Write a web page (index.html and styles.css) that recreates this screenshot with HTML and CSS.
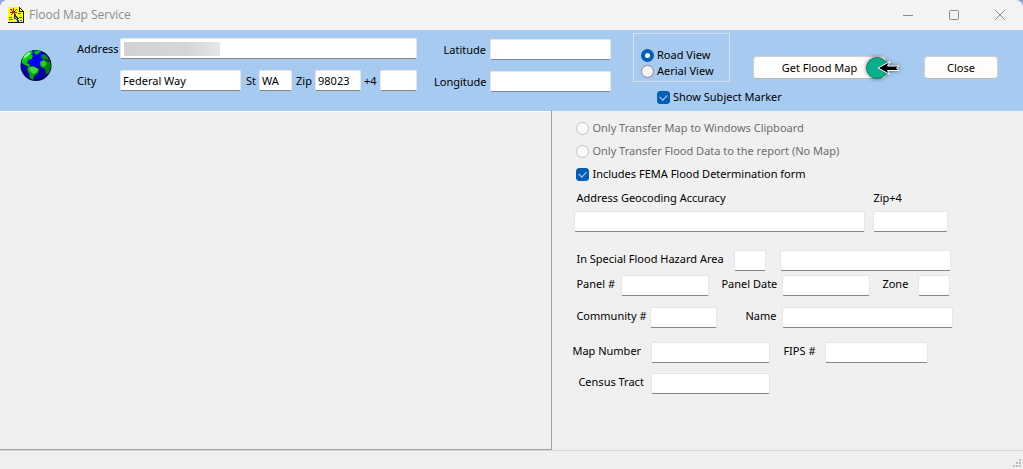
FILE: index.html
```html
<!DOCTYPE html>
<html lang="en">
<head>
<meta charset="utf-8">
<title>Flood Map Service</title>
<link rel="stylesheet" href="styles.css">
</head>
<body>
<div class="window">
  <header class="titlebar">
    <svg class="app-icon" width="16" height="17" viewBox="0 0 16 17" shape-rendering="crispEdges" aria-hidden="true">
      <path d="M0 0h12l3 3v13H0z" fill="#ff0"/>
      <path d="M0 15h16v1H0zM15 4h1v12h-1zM11 0h1v4h4v1h-5zM12 1h1v1h-1zM13 2h1v1h-1zM14 3h1v1h-1z" fill="#111"/>
      <path d="M12 2h1v2h-1zM13 3h1v1h-1z" fill="#fff"/>
      <path d="M2 2h2v1H2zM5 1h1v3H5zM8 2h1v1H8zM3 3h1v1H3zM7 3h1v1H7zM4 4h3v1H4zM2 5h7v1H2zM4 6h1v1H4zM6 6h1v1H6zM3 7h1v1H3zM7 7h1v1H7z" fill="#b01818"/>
      <path d="M10 6h3v1h-3zM1 10h3v1H1zM1 12h4v1H1zM11 10h3v1h-3zM12 13h2v1h-2z" fill="#3c64b4"/>
      <path d="M6 7h1v1H6zM6 8h2v1H6zM6 9h3v1H6zM6 10h4v1H6zM6 11h5v1H6zM8 12h2v1H8zM9 13h2v2H9z" fill="#1230a0"/>
      <path d="M7 10h1v1H7zM8 11h1v1H8z" fill="#9cf"/>
    </svg>
    <h1 class="title">Flood Map Service</h1>
    <div class="window-controls">
      <button class="wc" type="button" aria-label="Minimize"><svg width="12" height="12" viewBox="0 0 12 12"><path d="M1 6.500h10"/></svg></button>
      <button class="wc" type="button" aria-label="Maximize"><svg width="12" height="12" viewBox="0 0 12 12"><rect x="1.500" y="1.500" width="9" height="9" rx="1"/></svg></button>
      <button class="wc" type="button" aria-label="Close window"><svg width="12" height="12" viewBox="0 0 12 12"><path d="M1 1l10 10M11 1L1 11"/></svg></button>
    </div>
  </header>

  <form class="search">
    <svg class="globe" width="32" height="33" viewBox="0 0 32 33" aria-hidden="true">
      <circle cx="16" cy="16.500" r="15.500" fill="#000050"/>
      <circle cx="15.500" cy="16" r="14.500" fill="#0000a8"/>
      <path d="M7 6l5-4 9 1 4 6-5 8-6 1-6-4z" fill="#0000ff"/>
      <path d="M2 11l2-5 4-3 4-1 1 2-2 1 2 2-1 3-4 1-1 3 3 2-1 2-4-2-3-2z" fill="#00d000"/>
      <path d="M3 10l2-4 4-3 2 1-3 3-3 2z" fill="#98f898"/>
      <path d="M14 2l6-1 1 2-2 1-2 2-2-1z" fill="#00c000"/>
      <path d="M22 5l4 1 4 6-4-2-2 1-3-3z" fill="#009000"/>
      <path d="M8 18l5-1 6 3-1 4-4 3-1 4-3-2-1-5-2-3z" fill="#00a800"/>
      <path d="M9 18l5 0 4 2-1 3-4 2-3-3z" fill="#40d840"/>
      <path d="M21 14l4-3 5 2 1 4-2 7-3 1-1-5-3-1-2-2z" fill="#008400"/>
      <path d="M20 13l4-2 3 4-3 3-3-1z" fill="#30c830"/>
      <path d="M12 8h2v2h-2zM17 7h1v2h-1zM15 12h2v1h-2z" fill="#0000b0"/>
    </svg>
    <div class="address">
      <div class="row">
        <label class="w-address" for="address">Address</label>
        <div class="redacted-field"><input id="address" type="text"><span class="redaction"></span></div>
      </div>
      <div class="row">
        <label class="w-address" for="city">City</label>
        <input class="f-city" id="city" type="text" value="Federal Way">
        <label class="w-st" for="st">St</label>
        <input class="f-st" id="st" type="text" value="WA">
        <label class="w-zip" for="zip">Zip</label>
        <input class="f-zip" id="zip" type="text" value="98023">
        <label class="w-plus4" for="plus4">+4</label>
        <input class="f-plus4" id="plus4" type="text">
      </div>
    </div>
    <div class="coords">
      <div class="row"><label class="w-coord" for="lat">Latitude</label><input class="f-coord" id="lat" type="text"></div>
      <div class="row"><label class="w-coord" for="lon">Longitude</label><input class="f-coord" id="lon" type="text"></div>
    </div>
    <div class="view">
      <div class="view-group" role="radiogroup" aria-label="View">
        <label class="choice"><input type="radio" name="view" checked>Road View</label>
        <label class="choice"><input type="radio" name="view">Aerial View</label>
      </div>
      <label class="choice marker"><input type="checkbox" checked>Show Subject Marker</label>
    </div>
    <div class="get-map">
      <button class="button" type="button">Get Flood Map</button>
      <svg class="pointer" width="46" height="32" viewBox="0 0 46 32" aria-hidden="true">
        <circle cx="16" cy="16" r="10.500" fill="#0aae8c" stroke="#078565"/>
        <path d="M17 16l12-6.500-2.500 4.500H38l-2.500 2 2.500 2.500H26.500l2.500 4z" fill="#000" stroke="#fff"/>
      </svg>
    </div>
    <button class="button close" type="button">Close</button>
  </form>

  <main class="content">
    <section class="map" aria-label="Map"></section>
    <form class="details">
      <div class="options">
        <label class="choice off"><input type="radio" name="transfer" disabled>Only Transfer Map to Windows Clipboard</label>
        <label class="choice off"><input type="radio" name="transfer" disabled>Only Transfer Flood Data to the report (No Map)</label>
        <label class="choice"><input type="checkbox" checked>Includes FEMA Flood Determination form</label>
      </div>
      <div class="accuracy">
        <div class="stack f-accuracy"><label for="accuracy">Address Geocoding Accuracy</label><input id="accuracy" type="text"></div>
        <div class="stack f-tall"><label for="zip4">Zip+4</label><input id="zip4" type="text"></div>
      </div>
      <div class="row hazard">
        <label class="w-hazard" for="hazard">In Special Flood Hazard Area</label>
        <input class="f-small" id="hazard" type="text">
        <input class="f-name after" type="text" aria-label="Hazard area description">
      </div>
      <div class="row panel">
        <label class="w-panel" for="panel">Panel #</label><input class="f-date" id="panel" type="text">
        <label class="w-date" for="pdate">Panel Date</label><input class="f-date" id="pdate" type="text">
        <label class="w-zone" for="zone">Zone</label><input class="f-small" id="zone" type="text">
      </div>
      <div class="row community">
        <label class="w-community" for="community">Community #</label><input class="f-community" id="community" type="text">
        <label class="w-name" for="name">Name</label><input class="f-name" id="name" type="text">
      </div>
      <div class="row number">
        <label class="w-number" for="mapno">Map Number</label><input class="f-number" id="mapno" type="text">
        <label class="w-fips" for="fips">FIPS #</label><input class="f-fips" id="fips" type="text">
      </div>
      <div class="row census">
        <label class="w-census" for="tract">Census Tract</label><input class="f-number" id="tract" type="text">
      </div>
    </form>
  </main>
  <footer class="status">
    <svg width="10" height="10" viewBox="0 0 10 10" shape-rendering="crispEdges" aria-hidden="true"><path d="M6 0h2v2H6zM3 3h2v2H3zM6 3h2v2H6zM0 6h2v2H0zM3 6h2v2H3zM6 6h2v2H6z" fill="#bcbcbc"/></svg>
  </footer>
</div>
</body>
</html>
```
FILE: styles.css
```css
* { box-sizing: border-box; }
body {
  margin: 0;
  background: #8fa8d8;
  color: #000;
  font: 11px/16px "Noto Sans", "Open Sans", sans-serif;
}
input, button { font: inherit; color: inherit; margin: 0; }
.window {
  display: flex;
  flex-direction: column;
  min-height: 100vh;
  background: #f0f0f0;
  border-radius: 8px 8px 0 0;
  overflow: hidden;
}

.titlebar {
  display: flex;
  align-items: center;
  height: 30px;
  padding-left: 8px;
  background: #f3f3f3;
}
.title { margin: 0 0 0 5px; font-family: "Open Sans", sans-serif; font-size: 12px; font-weight: 400; color: #8c8c8c; }
.window-controls { display: flex; margin-left: auto; }
.wc {
  display: grid;
  place-items: center;
  width: 46px;
  height: 28px;
  padding: 0;
  border: 0;
  background: none;
}
.wc svg { fill: none; stroke: #8a8a8a; }

.search {
  display: flex;
  align-items: flex-start;
  padding: 0 25px 0 20px;
  min-height: 81px;
  background: #a6caf0;
}
.globe { flex: none; margin: 19px 25px 0 0; }
.row { display: flex; align-items: center; }
.row label, .stack label { flex: none; white-space: nowrap; }
input[type="text"] {
  width: 100%;
  min-width: 0;
  height: 21px;
  padding: 0 2px;
  border: 1px solid #e6e6e6;
  border-bottom-color: #868686;
  border-radius: 2px;
  background: #fff;
}
.row > input[type="text"] { flex: none; }
.row > input.f-city[type="text"] { flex: 1 1 0; width: 0; }
.address { display: grid; gap: 11px; flex: 1; min-width: 340px; padding-top: 8px; }
.coords { display: grid; gap: 11px; flex: none; padding: 9px 0 0 17px; }
.row .w-address { width: 43px; }
.row .w-st { width: 18px; padding-left: 5px; }
.row .w-zip { width: 23px; padding-left: 4px; }
.row .w-plus4 { width: 19px; padding-left: 3px; }
.row > .f-st { width: 33px; }
.row > .f-zip { width: 46px; }
.row > .f-plus4 { width: 37px; }
.row .w-coord { width: 56px; padding-right: 4px; text-align: right; }
.row > .f-coord { width: 121px; }
.redacted-field { display: grid; flex: 1; align-items: center; }
.redacted-field > * { grid-area: 1 / 1; }
.redaction {
  width: 96px;
  height: 14px;
  margin-left: 4px;
  background: linear-gradient(90deg, #d2d2d2, #d6d6d6 65%, #e6e6e6);
}

.view { flex: none; width: 120px; margin: 3px 0 0 22px; }
.view-group {
  width: 97px;
  padding: 13px 0 2px 7px;
  border: 1px solid #d5dfe5;
}
.choice { display: flex; align-items: center; gap: 3px; white-space: nowrap; }
.marker { margin: 7px 0 0 24px; }
.choice input {
  appearance: none;
  flex: none;
  width: 13px;
  height: 13px;
  border: 1px solid #858585;
  border-radius: 50%;
  background: #f3f3f3;
}
.choice input[type="radio"]:checked { border: 4px solid #005fb8; background: #fff; }
.choice input[type="checkbox"] { display: grid; border-color: #005fb8; border-radius: 3px; background: #005fb8; }
.choice input[type="checkbox"]::after {
  content: "";
  place-self: center;
  width: 6px;
  height: 4px;
  margin-bottom: 2px;
  border: solid #b9d3ec;
  border-width: 0 0 1px 1px;
  transform: rotate(-45deg);
}
.choice.off { color: #6d6d6d; }
.choice.off input { border-color: #c3c3c3; background: #f8f8f8; }

.get-map { position: relative; flex: none; width: 133px; margin-top: 26px; }
.button {
  width: 100%;
  height: 23px;
  padding: 0;
  border: 1px solid #d0d0d0;
  border-bottom-color: #b9b9b9;
  border-radius: 4px;
  background: #fdfdfd;
}
.button.close { flex: none; width: 74px; margin: 26px 0 0 38px; }
.pointer {
  position: absolute;
  left: 108px;
  top: -4px;
  filter: drop-shadow(0 0 2px rgba(0, 0, 0, 0.5));
}

.content { display: flex; flex: 1; min-height: 339px; }
.map {
  flex: 0 0 54%;
  border: solid #a0a0a0;
  border-width: 0 1px 1px 0;
  box-shadow: inset 0 1px #fff;
}
.details { flex: 1; min-width: 0; padding: 9px 0 0 20px; }
.options { display: grid; gap: 7px; padding-left: 4px; }
.accuracy { display: flex; gap: 8px; padding: 8px 0 18px 2px; }
.stack { display: grid; gap: 5px; }
.stack label { padding-left: 2px; }
.accuracy > .f-tall label { padding-left: 0; }
.f-accuracy { width: 291px; }
.f-tall { width: 75px; }
.panel { margin-top: 4px; }
.community { margin-top: 11px; }
.number { margin-top: 14px; }
.census { margin-top: 10px; }
.details .row > label { align-self: flex-start; margin-top: 1px; padding-left: 12px; }
.details .row .w-hazard { width: 162px; padding-left: 4px; }
.details .row .w-panel { width: 49px; padding-left: 4px; }
.details .row .w-date { width: 73px; }
.details .row .w-zone { width: 48px; }
.details .row .w-community { width: 78px; padding-left: 4px; }
.details .row .w-name { width: 65px; padding-left: 28px; }
.details .row .w-number { width: 79px; padding-left: 0; }
.details .row .w-census { width: 79px; padding-left: 6px; }
.details .row .w-fips { width: 55px; padding-left: 13px; }
.details .row > .f-small { width: 32px; }
.details .row > .f-name { width: 171px; }
.details .row > .f-date { width: 88px; }
.details .row > .f-community { width: 67px; }
.details .row > .f-number { width: 119px; }
.details .row > .f-fips { width: 103px; }
.details .row > .after { margin-left: 14px; }

.status {
  display: flex;
  justify-content: flex-end;
  align-items: flex-end;
  height: 19px;
  border-top: 1px solid #d7d7d7;
}
```
